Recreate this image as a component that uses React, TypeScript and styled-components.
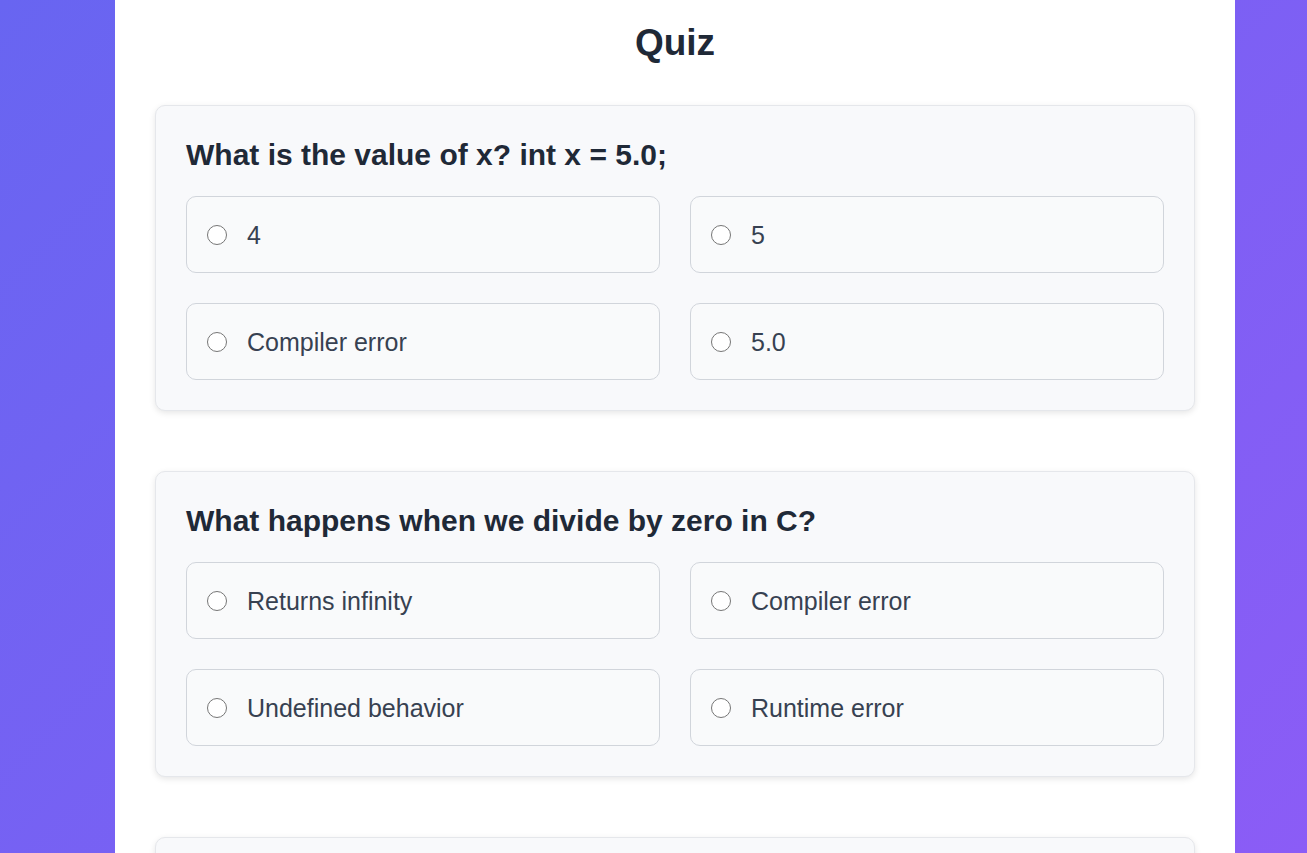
import React from "react";
import styled, { createGlobalStyle } from "styled-components";

const GlobalStyle = createGlobalStyle`
  html, body {
    margin: 0;
    padding: 0;
    height: 100%;
  }
  body {
    background: linear-gradient(135deg, #6865f1 0%, #8b5cf6 100%);
    background-attachment: fixed;
    font-family: "Liberation Sans", Arial, Helvetica, sans-serif;
    overflow: hidden;
  }
`;

const Page = styled.div`
  display: flex;
  padding: 0 72px 0 115px;
  min-height: 100vh;
`;

const Container = styled.main`
  flex: 1;
  background: #ffffff;
  padding: 20px 40px 40px;
`;

const Title = styled.h1`
  margin: 0 0 40px;
  text-align: center;
  font-size: 37px;
  line-height: 45px;
  font-weight: 700;
  color: #1f2937;
`;

const Card = styled.section`
  background: #f8f9fb;
  border: 1px solid #e5e7eb;
  border-radius: 10px;
  box-shadow: 0 2px 6px rgba(0, 0, 0, 0.1);
  padding: 30px;
  margin-bottom: 60px;
`;

const Question = styled.h2`
  margin: 0 0 22px;
  font-size: 30px;
  line-height: 38px;
  font-weight: 700;
  color: #1f2937;
`;

const Options = styled.div`
  display: grid;
  grid-template-columns: 1fr 1fr;
  gap: 30px;
`;

const Option = styled.label`
  box-sizing: border-box;
  height: 77px;
  display: flex;
  align-items: center;
  gap: 20px;
  padding: 0 20px;
  border: 1px solid #d1d5db;
  border-radius: 10px;
  background: #f9fafb;
  font-size: 25px;
  line-height: 38px;
  color: #374151;
  cursor: pointer;
`;

const Radio = styled.span`
  width: 20px;
  height: 20px;
  box-sizing: border-box;
  border: 1.5px solid #767676;
  border-radius: 50%;
  background: #ffffff;
  flex-shrink: 0;
`;

const quiz = [
  {
    q: "What is the value of x? int x = 5.0;",
    options: ["4", "5", "Compiler error", "5.0"],
  },
  {
    q: "What happens when we divide by zero in C?",
    options: ["Returns infinity", "Compiler error", "Undefined behavior", "Runtime error"],
  },
  {
    q: "Which keyword is used to define a constant in C?",
    options: ["const", "final", "static", "define"],
  },
];

export default function App() {
  return (
    <>
      <GlobalStyle />
      <Page>
        <Container>
          <Title>Quiz</Title>
          {quiz.map((item, i) => (
            <Card key={i}>
              <Question>{item.q}</Question>
              <Options>
                {item.options.map((o, j) => (
                  <Option key={j}>
                    <Radio />
                    {o}
                  </Option>
                ))}
              </Options>
            </Card>
          ))}
        </Container>
      </Page>
    </>
  );
}
